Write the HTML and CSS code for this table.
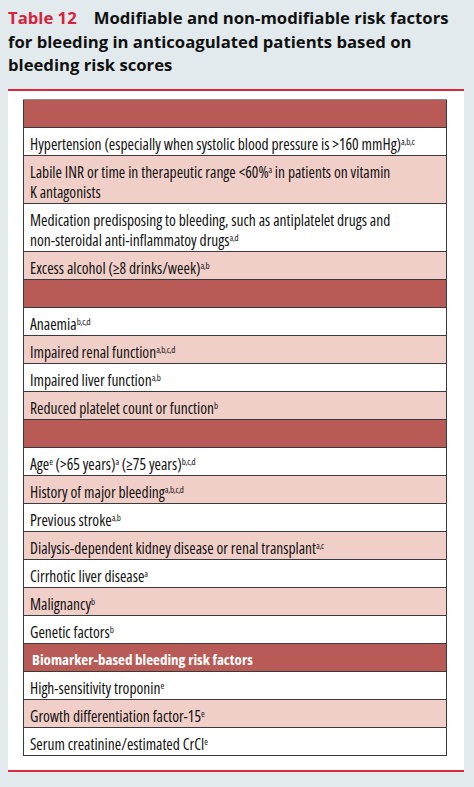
FILE: index.html
```html
<!DOCTYPE html>
<html lang="en">
<head>
<meta charset="utf-8">
<title>Table 12</title>
<link rel="stylesheet" href="styles.css">
</head>
<body>
<h1 class="title"><span class="label">Table 12</span>Modifiable and non-modifiable risk factors<br>for bleeding in anticoagulated patients based on<br>bleeding risk scores</h1>
<div class="panel">
  <table class="risk">
    <tbody>
      <tr class="head"><th>&nbsp;</th></tr>
      <tr><td>Hypertension (especially when systolic blood pressure is &gt;160 mmHg)<sup>a,b,c</sup></td></tr>
      <tr class="alt"><td>Labile INR or time in therapeutic range &lt;60%<sup>a</sup> in patients on vitamin<br>K antagonists</td></tr>
      <tr><td>Medication predisposing to bleeding, such as antiplatelet drugs and<br>non-steroidal anti-inflammatoy drugs<sup>a,d</sup></td></tr>
      <tr class="alt"><td>Excess alcohol (≥8 drinks/week)<sup>a,b</sup></td></tr>
      <tr class="head"><th>&nbsp;</th></tr>
      <tr><td>Anaemia<sup>b,c,d</sup></td></tr>
      <tr class="alt"><td>Impaired renal function<sup>a,b,c,d</sup></td></tr>
      <tr><td>Impaired liver function<sup>a,b</sup></td></tr>
      <tr class="alt"><td>Reduced platelet count or function<sup>b</sup></td></tr>
      <tr class="head"><th>&nbsp;</th></tr>
      <tr><td>Age<sup>e</sup> (&gt;65 years)<sup>a</sup> (≥75 years)<sup>b,c,d</sup></td></tr>
      <tr class="alt"><td>History of major bleeding<sup>a,b,c,d</sup></td></tr>
      <tr><td>Previous stroke<sup>a,b</sup></td></tr>
      <tr class="alt"><td>Dialysis-dependent kidney disease or renal transplant<sup>a,c</sup></td></tr>
      <tr><td>Cirrhotic liver disease<sup>a</sup></td></tr>
      <tr class="alt"><td>Malignancy<sup>b</sup></td></tr>
      <tr><td>Genetic factors<sup>b</sup></td></tr>
      <tr class="head"><th>Biomarker-based bleeding risk factors</th></tr>
      <tr><td>High-sensitivity troponin<sup>e</sup></td></tr>
      <tr class="alt"><td>Growth differentiation factor-15<sup>e</sup></td></tr>
      <tr><td>Serum creatinine/estimated CrCl<sup>e</sup></td></tr>
    </tbody>
  </table>
</div>
</body>
</html>
```
FILE: styles.css
```css
html, body {
  margin: 0;
  padding: 0;
  background: #e2eaed;
}

.title {
  margin: 0;
  padding: 6px 8px 12px;
  font-family: "Open Sans", "Liberation Sans", sans-serif;
  font-weight: 700;
  font-size: 16.7px;
  line-height: 23.5px;
  color: #111;
}

.title .label {
  color: #d2243d;
  margin-right: 17px;
}

.panel {
  margin: 0 10px 0 8px;
  background: #fff;
  border-top: 2px solid #d8293f;
  border-bottom: 2px solid #d8293f;
  padding: 8px 17px 14px 15px;
}

.risk {
  width: 100%;
  border-collapse: collapse;
  font-family: "Open Sans", "Liberation Sans", sans-serif;
  font-stretch: 82.5%;
  font-size: 15.5px;
  line-height: 20px;
  color: #111;
  border: 1px solid #3a3a3a;
  border-top-color: #8c8c8c;
}

.risk td,
.risk th {
  padding: 6px 6px 1px 6px;
  text-align: left;
  border-top: 1px solid #3a3a3a;
  border-bottom: 1px solid #3a3a3a;
}

.risk tr:first-child th {
  border-top-color: #8c8c8c;
}

.risk td {
  background: #fff;
}

.risk .alt td {
  background: #f1cfc9;
}

.risk .head th {
  background: #b85b57;
  color: #fff;
  font-weight: 700;
  font-size: 15px;
  padding-left: 8px;
  padding-top: 5px;
  padding-bottom: 2px;
}

.risk sup {
  font-size: 9px;
  line-height: 0;
  vertical-align: 5px;
  letter-spacing: -0.3px;
}
```
